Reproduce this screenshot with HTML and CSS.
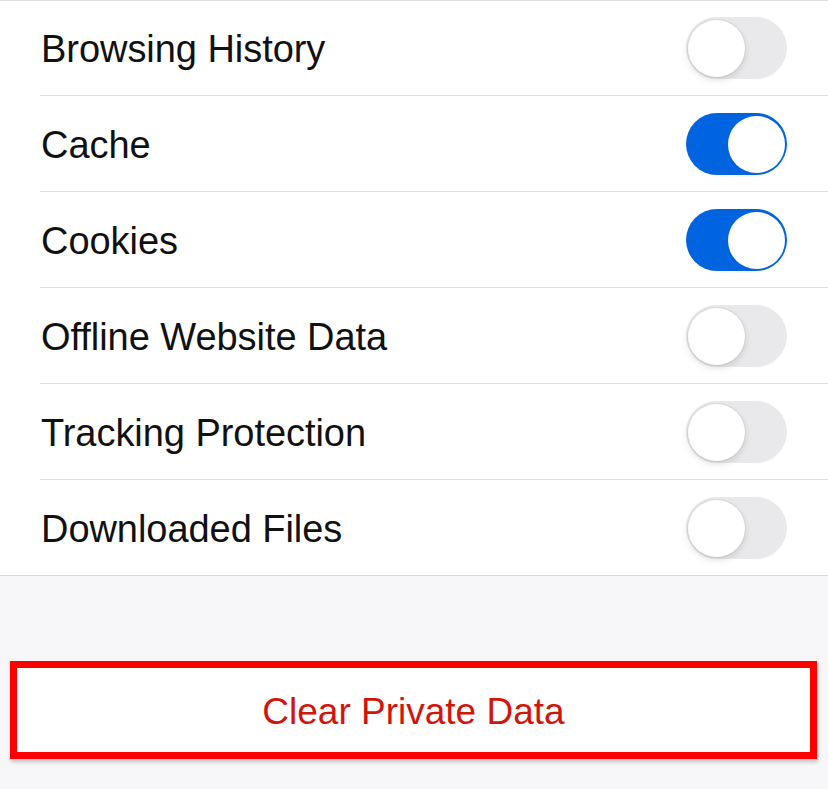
FILE: index.html
```html
<!DOCTYPE html>
<html lang="en">
<head>
<meta charset="utf-8">
<title>Clear Private Data</title>
<link rel="stylesheet" href="styles.css">
</head>
<body>
<div class="list">
  <div class="row"><div class="row-inner"><span class="label">Browsing History</span><span class="toggle"><span class="knob"></span></span></div></div>
  <div class="row"><div class="row-inner"><span class="label">Cache</span><span class="toggle on"><span class="knob"></span></span></div></div>
  <div class="row"><div class="row-inner"><span class="label">Cookies</span><span class="toggle on"><span class="knob"></span></span></div></div>
  <div class="row"><div class="row-inner"><span class="label">Offline Website Data</span><span class="toggle"><span class="knob"></span></span></div></div>
  <div class="row"><div class="row-inner"><span class="label">Tracking Protection</span><span class="toggle"><span class="knob"></span></span></div></div>
  <div class="row last"><div class="row-inner"><span class="label">Downloaded Files</span><span class="toggle"><span class="knob"></span></span></div></div>
</div>
<div class="footer">
  <div class="clear-btn"><span class="clear-text">Clear Private Data</span></div>
</div>
</body>
</html>
```

FILE: styles.css
```css
html, body {
  margin: 0;
  padding: 0;
  height: 100%;
}
body {
  background: #f7f7f9;
  font-family: "Liberation Sans", Arial, sans-serif;
  overflow: hidden;
}
.list {
  background: #ffffff;
  box-shadow: inset 0 1px 0 #dedee0;
  border-bottom: 1px solid #d9d9dc;
}
.row {
  padding-left: 40px;
}
.row-inner {
  height: 95px;
  display: flex;
  align-items: center;
  justify-content: space-between;
  padding-right: 41px;
  border-bottom: 1px solid #dedee0;
}
.row.last .row-inner {
  border-bottom: none;
}
.label {
  font-size: 38px;
  color: #111113;
  padding-left: 1px;
  padding-top: 4px;
  letter-spacing: -0.05px;
}
.toggle {
  position: relative;
  width: 101px;
  height: 62px;
  border-radius: 31px;
  background: #e9e9eb;
  flex: none;
  margin-top: 1px;
}
.toggle.on {
  background: #0064e0;
}
.knob {
  position: absolute;
  top: 2.5px;
  left: 2px;
  width: 57px;
  height: 57px;
  border-radius: 50%;
  background: #ffffff;
  box-shadow: 0 0 0 1px rgba(0,0,0,0.05), 0 3px 7px rgba(0,0,0,0.13);
}
.toggle.on .knob {
  left: auto;
  right: 2px;
  box-shadow: none;
}
.footer {
  padding-top: 85px;
  padding-left: 10px;
}
.clear-btn {
  width: 793px;
  height: 84px;
  border: 7px solid #ff0000;
  background: #ffffff;
  display: flex;
  align-items: center;
  justify-content: center;
  font-size: 37px;
  color: #d2150b;
  box-shadow: 1px 3px 4px rgba(0,0,0,0.22);
}
.clear-text {
  padding-top: 4px;
}
```
